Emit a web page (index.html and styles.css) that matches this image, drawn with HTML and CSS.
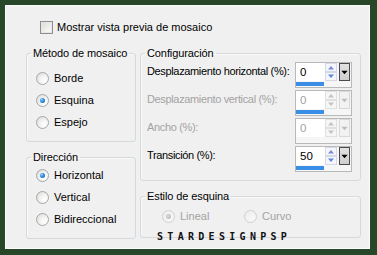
FILE: index.html
```html
<!DOCTYPE html>
<html lang="es">
<head>
<meta charset="utf-8">
<link rel="stylesheet" href="styles.css">
</head>
<body>
<div class="panel">
  <div class="check-row"><span class="checkbox"></span><span>Mostrar vista previa de mosaico</span></div>
  <div class="columns">
    <div class="col col-left">
      <fieldset class="group g-method">
        <legend>Método de mosaico</legend>
        <div class="radio-list">
          <div class="radio"><span class="dot"></span>Borde</div>
          <div class="radio"><span class="dot on"></span>Esquina</div>
          <div class="radio"><span class="dot"></span>Espejo</div>
        </div>
      </fieldset>
      <fieldset class="group g-dir">
        <legend>Dirección</legend>
        <div class="radio-list">
          <div class="radio"><span class="dot on"></span>Horizontal</div>
          <div class="radio"><span class="dot"></span>Vertical</div>
          <div class="radio"><span class="dot"></span>Bidireccional</div>
        </div>
      </fieldset>
    </div>
    <div class="col col-right">
      <fieldset class="group g-config">
        <legend>Configuración</legend>
        <div class="fields">
          <div class="field-row">
            <span class="label">Desplazamiento horizontal (%):</span>
            <div class="spin">
              <div class="spin-main">
                <span class="spin-value">0</span>
                <svg class="spin-arrows" width="12" height="18" viewBox="0 0 12 18"><rect x="0.5" y="0.5" width="11" height="8" fill="#f4f6fb" stroke="#d3d9e6"/><rect x="0.5" y="9.5" width="11" height="8" fill="#f4f6fb" stroke="#d3d9e6"/><path d="M3 6.5h6L6 3z" fill="#7a8ad8"/><path d="M3 11.5h6L6 15z" fill="#5a88dc"/></svg>
                <span class="spin-drop"><svg width="10" height="16" viewBox="0 0 10 16"><path d="M1.5 6.5h7L5 10.5z" fill="#000"/></svg></span>
              </div>
              <div class="spin-bar"></div>
            </div>
          </div>
          <div class="field-row off">
            <span class="label">Desplazamiento vertical (%):</span>
            <div class="spin">
              <div class="spin-main">
                <span class="spin-value">0</span>
                <svg class="spin-arrows" width="12" height="18" viewBox="0 0 12 18"><rect x="0.5" y="0.5" width="11" height="8" fill="#f6f6f6" stroke="#e0e0e0"/><rect x="0.5" y="9.5" width="11" height="8" fill="#f6f6f6" stroke="#e0e0e0"/><path d="M3 6.5h6L6 3z" fill="#c4c4c4"/><path d="M3 11.5h6L6 15z" fill="#c4c4c4"/></svg>
                <span class="spin-drop"><svg width="10" height="16" viewBox="0 0 10 16"><path d="M1.5 6.5h7L5 10.5z" fill="#bdbdbd"/></svg></span>
              </div>
              <div class="spin-bar"></div>
            </div>
          </div>
          <div class="field-row off">
            <span class="label">Ancho (%):</span>
            <div class="spin">
              <div class="spin-main">
                <span class="spin-value">0</span>
                <svg class="spin-arrows" width="12" height="18" viewBox="0 0 12 18"><rect x="0.5" y="0.5" width="11" height="8" fill="#f6f6f6" stroke="#e0e0e0"/><rect x="0.5" y="9.5" width="11" height="8" fill="#f6f6f6" stroke="#e0e0e0"/><path d="M3 6.5h6L6 3z" fill="#c4c4c4"/><path d="M3 11.5h6L6 15z" fill="#c4c4c4"/></svg>
                <span class="spin-drop"><svg width="10" height="16" viewBox="0 0 10 16"><path d="M1.5 6.5h7L5 10.5z" fill="#bdbdbd"/></svg></span>
              </div>
            </div>
          </div>
          <div class="field-row last">
            <span class="label">Transición (%):</span>
            <div class="spin">
              <div class="spin-main">
                <span class="spin-value">50</span>
                <svg class="spin-arrows" width="12" height="18" viewBox="0 0 12 18"><rect x="0.5" y="0.5" width="11" height="8" fill="#f4f6fb" stroke="#d3d9e6"/><rect x="0.5" y="9.5" width="11" height="8" fill="#f4f6fb" stroke="#d3d9e6"/><path d="M3 6.5h6L6 3z" fill="#7a8ad8"/><path d="M3 11.5h6L6 15z" fill="#5a88dc"/></svg>
                <span class="spin-drop"><svg width="10" height="16" viewBox="0 0 10 16"><path d="M1.5 6.5h7L5 10.5z" fill="#000"/></svg></span>
              </div>
              <div class="spin-bar"></div>
            </div>
          </div>
        </div>
      </fieldset>
      <fieldset class="group g-corner">
        <legend>Estilo de esquina</legend>
        <div class="radio-line">
          <div class="radio off r-lineal"><span class="dot on"></span>Lineal</div>
          <div class="radio off"><span class="dot"></span>Curvo</div>
        </div>
      </fieldset>
    </div>
  </div>
  <div class="watermark">STARDESIGNPSP</div>
</div>
</body>
</html>
```
FILE: styles.css
```css
* { box-sizing: border-box; }
html, body { margin: 0; padding: 0; }
body {
  width: 377px;
  height: 255px;
  background: #284628;
  font-family: "Liberation Sans", Arial, sans-serif;
  font-size: 11px;
  color: #000;
  overflow: hidden;
  white-space: nowrap;
}
.panel {
  position: relative;
  margin: 5px 0 0 5px;
  width: 365px;
  height: 244px;
  border: 1px solid #fbfbfb;
  background: #f0f0f0;
  padding: 15px 0 0 20px;
}
.check-row {
  display: flex;
  align-items: center;
  gap: 4px;
  padding-left: 14px;
  height: 13px;
  line-height: 13px;
}
.checkbox {
  width: 13px;
  height: 13px;
  border: 1px solid #8e8f8f;
  background: linear-gradient(135deg, #d8d8d4 0%, #eeeeec 55%, #fbfbfb 100%);
  box-shadow: inset 0 0 0 1px #e6e6e6;
}
.columns {
  display: flex;
  gap: 4px;
  margin-top: 13px;
}
.col {
  display: flex;
  flex-direction: column;
  gap: 9px;
}
.col-left { width: 110px; }
.col-right { width: 221px; }
.group {
  margin: 0;
  padding: 0;
  min-width: 0;
  border: 1px solid #d3d9dc;
  border-radius: 3px;
  box-shadow: inset 1px 1px 0 #fafafa;
}
.group legend {
  margin-left: 4px;
  padding: 0 2px;
  line-height: 12px;
  height: 12px;
  white-space: nowrap;
  letter-spacing: -0.1px;
}
.g-method { height: 95px; padding-top: 8px; }
.g-dir { height: 88px; padding-top: 1px; }
.g-config { height: 134px; padding-top: 3px; }
.g-corner { height: 48px; padding-top: 3px; }
.radio-list { margin-left: 9px; }
.fields { margin: 0 8px 0 6px; }
.radio {
  display: flex;
  align-items: center;
  gap: 5px;
  height: 22px;
}
.radio.off { color: #a3a3a3; }
.dot {
  position: relative;
  width: 13px;
  height: 13px;
  flex: none;
  border-radius: 50%;
  border: 1px solid #a4a7ab;
  background: radial-gradient(circle at 70% 70%, #ffffff 0%, #f2f2f0 45%, #d6d6d0 100%);
}
.dot.on::after {
  content: "";
  position: absolute;
  left: 3px;
  top: 3px;
  width: 5px;
  height: 5px;
  border-radius: 50%;
  background: radial-gradient(circle at 35% 35%, #8fd0ff 0%, #2f8de0 45%, #15559e 100%);
}
.radio.off .dot {
  border-color: #d0d0d0;
  background: radial-gradient(circle at 70% 70%, #f8f8f8 0%, #ececec 100%);
}
.radio.off .dot.on::after {
  background: radial-gradient(circle at 40% 40%, #d8d8d8 0%, #b5b5b5 100%);
}
.radio-line { display: flex; margin-left: 21px; }
.r-lineal { width: 82px; }
.field-row {
  display: flex;
  justify-content: space-between;
  align-items: flex-start;
  height: 26px;
  margin-bottom: 2px;
}
.field-row.last { margin-top: 1px; }
.field-row .label { line-height: 18px; letter-spacing: -0.35px; }
.field-row.off { color: #a3a3a3; }
.spin {
  flex: none;
  width: 57px;
  height: 26px;
  border: 1px solid #b9b9b9;
  background: #f6f6f6;
}
.spin-main {
  display: flex;
  height: 18px;
}
.spin-value {
  width: 29px;
  height: 18px;
  background: #fff;
  padding-left: 4px;
  line-height: 18px;
  font-size: 11.5px;
}
.spin-arrows { display: block; flex: none; }
.spin-drop {
  margin-left: 2px;
  width: 11px;
  height: 18px;
  border: 1px solid #4a4a4a;
  background: linear-gradient(#e2e2e2, #cfcfcf);
  display: flex;
  align-items: center;
  justify-content: center;
}
.spin-drop svg { display: block; }
.off .spin-drop {
  border-color: #d8d8d8;
  background: #f2f2f2;
}
.off .spin-value { color: #a3a3a3; }
.spin-bar {
  margin-top: 1px;
  width: 28px;
  height: 4px;
  background: #3a8ee6;
}
.watermark {
  position: absolute;
  left: 151px;
  top: 226px;
  font-family: "DejaVu Sans Mono", monospace;
  font-weight: bold;
  font-size: 10px;
  line-height: 10px;
  letter-spacing: 4.3px;
  color: #111;
}
```
